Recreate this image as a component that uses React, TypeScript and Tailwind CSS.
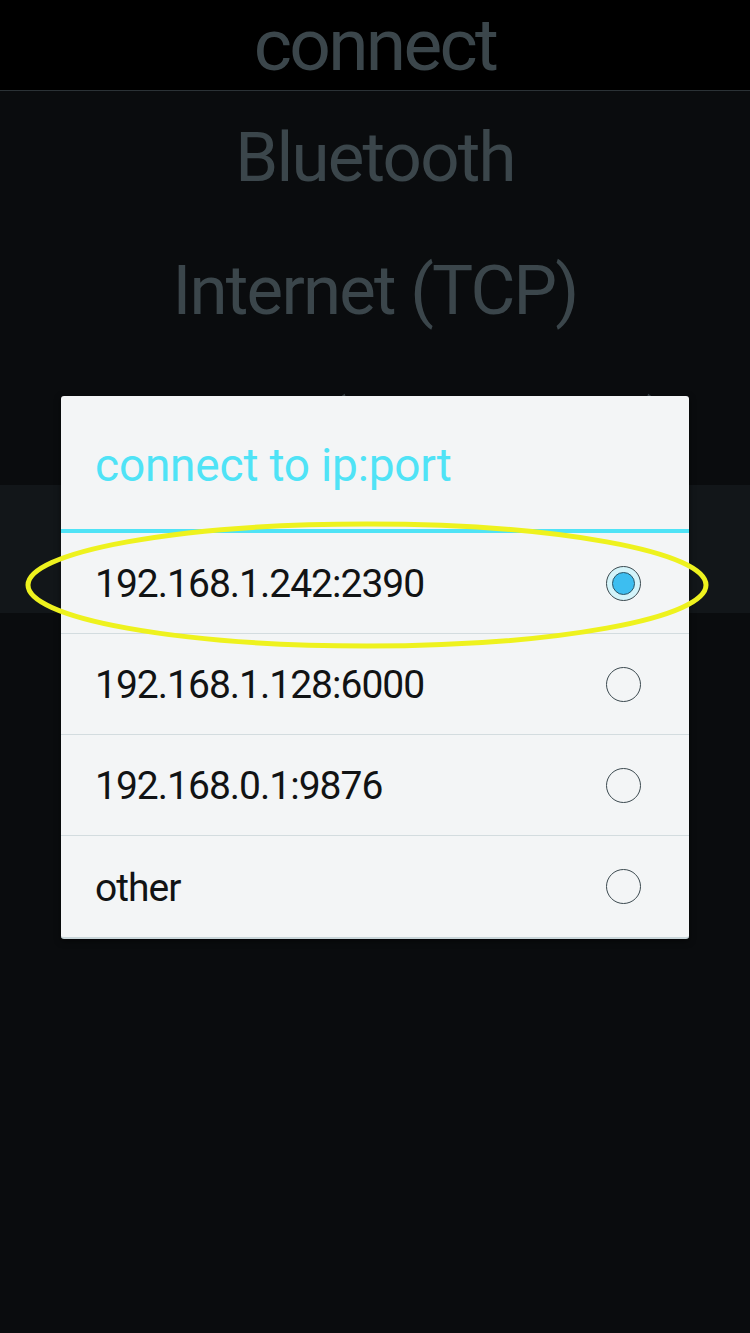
const options = [
  { label: '192.168.1.242:2390', selected: true },
  { label: '192.168.1.128:6000', selected: false },
  { label: '192.168.0.1:9876', selected: false },
  { label: 'other', selected: false },
]

const Radio = ({ selected }: { selected: boolean }) => {
  if (!selected) {
    return <div className="w-[35px] h-[35px] rounded-full border-[1.5px] border-[#3c4a50]" />
  }
  return (
    <div className="w-[35px] h-[35px] rounded-full border-[1.5px] border-[#3c4a50] bg-[#d3f4fa] flex items-center justify-center">
      <div className="w-[23px] h-[23px] rounded-full border border-[#2b5566] bg-[#3dbef0]" />
    </div>
  )
}

export default function App() {
  return (
    <div className="relative w-[750px] h-[1333px] bg-[#0a0c0e] overflow-hidden" style={{ fontFamily: 'Roboto, "Liberation Sans", sans-serif' }}>
      {/* action bar */}
      <div className="h-[91px] bg-black border-b border-[#2b3236] flex items-center justify-center">
        <span className="text-[73px] leading-none tracking-[-2.7px] text-[#3b464b]">connect</span>
      </div>

      {/* connection types list */}
      <div className="flex flex-col text-[#3b464b] text-[69px] leading-none tracking-[-1.8px]">
        <div className="h-[133px] flex items-center justify-center">Bluetooth</div>
        <div className="h-[133px] flex items-center justify-center">Internet (TCP)</div>
        <div className="h-[128px] pt-[9px] flex items-center justify-center">Arduino (Serial USB)</div>
        <div className="h-[128px] bg-[#121619] flex items-center justify-center">USB</div>
      </div>

      {/* dialog */}
      <div className="absolute left-[61px] top-[396px] w-[628px] bg-[#f3f5f6] rounded-[3px] border-b-2 border-[#c9d6da] shadow-[0_2px_6px_rgba(0,0,0,0.5)]">
        <div className="h-[133px] pl-[34px] pt-[46px]">
          <span className="text-[46px] leading-none tracking-[-0.2px] text-[#4fe3f6]">connect to ip:port</span>
        </div>
        <div className="h-[4px] bg-[#4fe3f6]" />
        {options.map((o, i) => (
          <div
            key={o.label}
            className={
              'h-[101px] pl-[34px] pr-[48px] flex items-center justify-between ' +
              (i < options.length - 1 ? 'border-b border-[#d3dcdf]' : '')
            }
          >
            <span className="text-[39px] leading-none tracking-[-1px] text-[#111314] mt-[3px]">{o.label}</span>
            <Radio selected={o.selected} />
          </div>
        ))}
      </div>

      {/* yellow highlight ellipse */}
      <svg className="absolute left-0 top-0 pointer-events-none" width="750" height="1333">
        <ellipse cx="367" cy="585" rx="339" ry="61" fill="none" stroke="#eef21e" strokeWidth="5" />
      </svg>
    </div>
  )
}
